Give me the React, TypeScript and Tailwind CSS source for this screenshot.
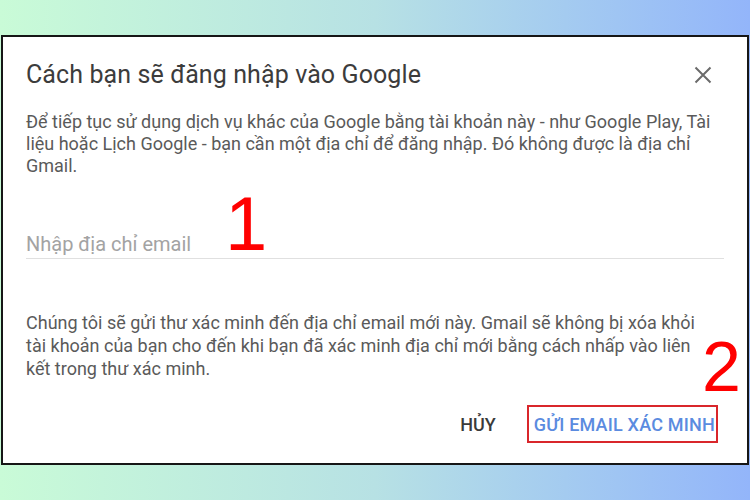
import React from "react";

export default function App() {
  return (
    <div className="w-[750px] h-[500px] pt-[35px] px-[1px] bg-gradient-to-r from-[#c9fbd7] via-[#b7e1e4] to-[#93b5fa]" style={{ fontFamily: "Roboto, 'Noto Sans', sans-serif" }}>
      <div className="relative h-[430px] border-2 border-[#161616] bg-white px-[23px] pt-[24px]">
        <div className="flex items-center justify-between h-[28px]">
          <div className="text-[25px] leading-[28px] text-[#3c3c3c] tracking-[0.1px]">Cách bạn sẽ đăng nhập vào Google</div>
          <svg width="20" height="20" viewBox="0 0 20 20" className="mr-[11px]">
            <path d="M2.5 2.5 L17.5 17.5 M17.5 2.5 L2.5 17.5" stroke="#6b6b6b" strokeWidth="2" />
          </svg>
        </div>
        <p className="mt-[22px] text-[18px] leading-[22px] text-[#5a5a5a]">
          Để tiếp tục sử dụng dịch vụ khác của Google bằng tài khoản này - như Google Play, Tài liệu hoặc Lịch Google - bạn cần một địa chỉ để đăng nhập. Đó không được là địa chỉ Gmail.
        </p>
        <div className="mt-[55px] border-b border-[#e0e0e0] pb-[2px]">
          <div className="text-[20px] leading-[24px] text-[#a3a3a3]">Nhập địa chỉ email</div>
        </div>
        <p className="mt-[52px] text-[18px] leading-[23px] text-[#5a5a5a] pr-[20px]">
          Chúng tôi sẽ gửi thư xác minh đến địa chỉ email mới này. Gmail sẽ không bị xóa khỏi tài khoản của bạn cho đến khi bạn đã xác minh địa chỉ mới bằng cách nhấp vào liên kết trong thư xác minh.
        </p>
        <div className="mt-[25px] flex justify-end items-center gap-[31px] pr-[6px]">
          <span className="text-[18px] font-medium text-[#3a3a3a]">HỦY</span>
          <span className="border-2 border-[#d9262b] h-[38px] pl-[5px] pr-[1px] flex items-center text-[18px] font-medium text-[#5b8be0] tracking-[0.2px]">GỬI EMAIL XÁC MINH</span>
        </div>
        <div className="absolute left-[222px] top-[149px] text-[76px] leading-[76px] font-light text-[#ff0000]" style={{ fontFamily: "'Liberation Sans', Arial, sans-serif" }}>1</div>
        <div className="absolute left-[699px] top-[295px] text-[70px] leading-[70px] font-light text-[#ff0000]" style={{ fontFamily: "'Liberation Sans', Arial, sans-serif" }}>2</div>
      </div>
    </div>
  );
}
